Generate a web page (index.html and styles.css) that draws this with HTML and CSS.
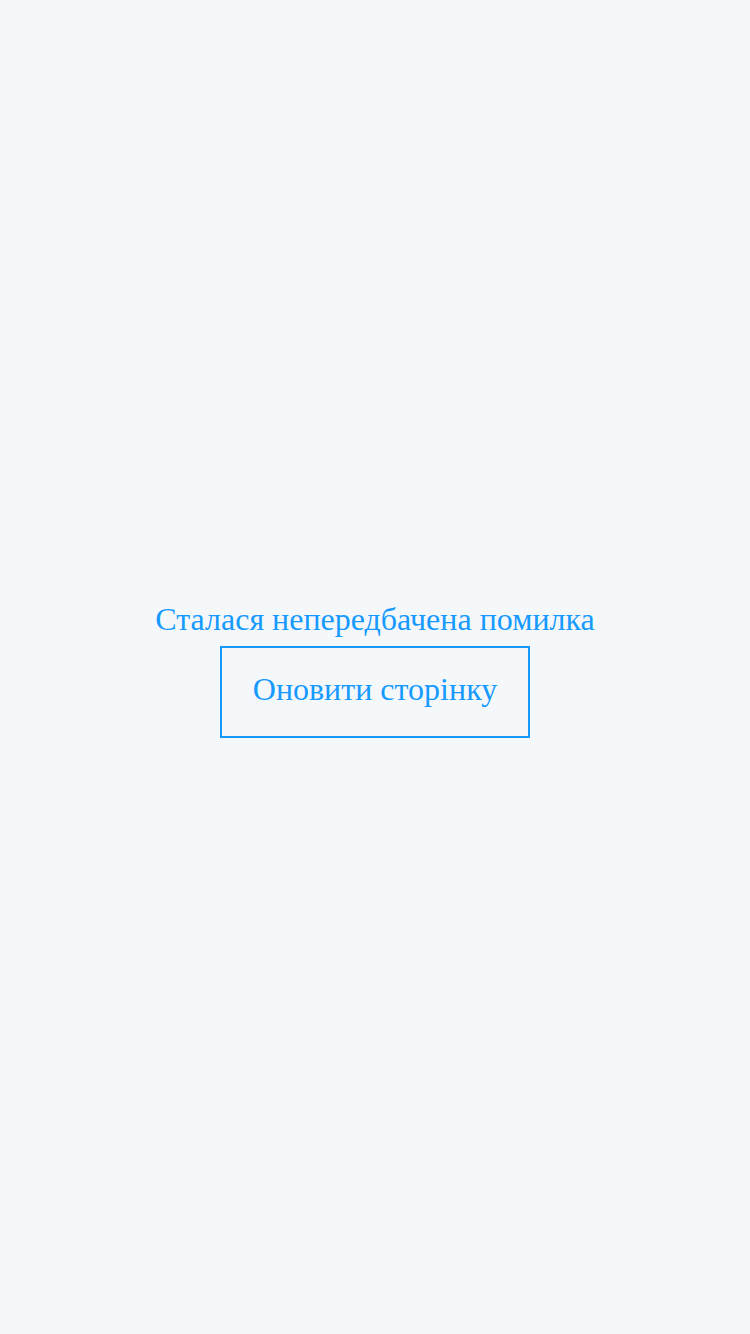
FILE: index.html
```html
<!DOCTYPE html>
<html lang="uk">
<head>
  <meta charset="utf-8">
  <meta name="viewport" content="width=device-width, initial-scale=1">
  <title>Сталася непередбачена помилка</title>
  <link rel="stylesheet" href="styles.css">
</head>
<body>
  <main class="error">
    <p class="error-message">Сталася непередбачена помилка</p>
    <button class="error-button" type="button">Оновити сторінку</button>
  </main>
</body>
</html>
```

FILE: styles.css
```css
body {
  margin: 0;
  background: #f4f8fb;
  color: #169aff;
  font-family: "Liberation Serif", "Times New Roman", serif;
  font-size: 32px;
  line-height: 38px;
}

.error {
  box-sizing: border-box;
  display: flex;
  flex-direction: column;
  align-items: center;
  justify-content: center;
  gap: 8px;
  min-height: 100vh;
  padding-top: 4px;
}

.error-message {
  margin: 0;
  text-align: center;
}

.error-button {
  padding: 22px 31px 28px;
  border: 2px solid #169aff;
  border-radius: 0;
  background: transparent;
  color: inherit;
  font: inherit;
  cursor: pointer;
}
```
